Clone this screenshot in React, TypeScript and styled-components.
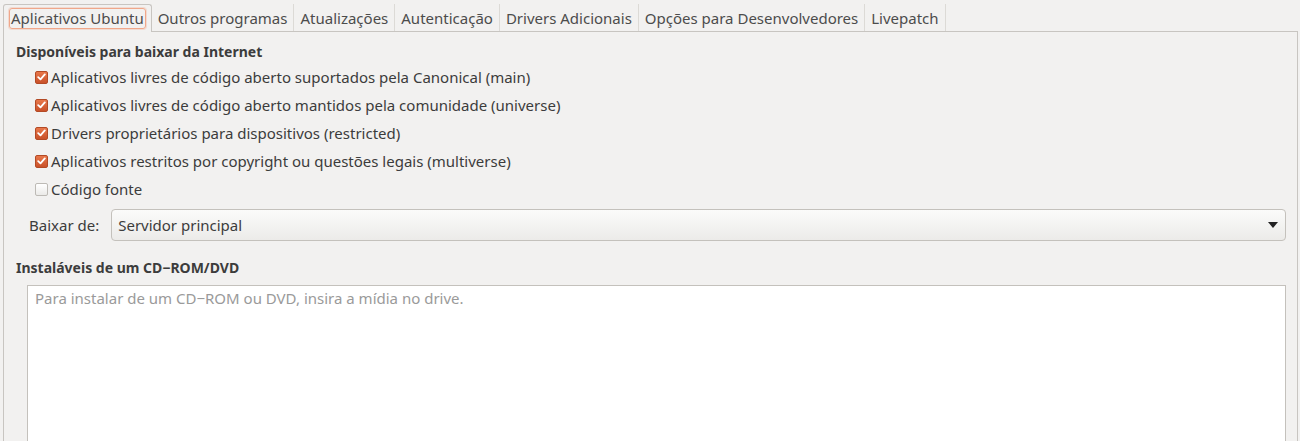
import React from 'react';
import styled, { createGlobalStyle } from 'styled-components';

const GlobalStyle = createGlobalStyle`
  html, body {
    margin: 0;
    padding: 0;
    background: #f2f1f0;
    font-family: "Noto Sans", "DejaVu Sans", sans-serif;
    font-size: 15px;
    color: #3c3c3c;
  }
`;

const Page = styled.div`
  height: 441px;
  overflow: hidden;
  padding: 4px 2px 0 3px;
  box-sizing: border-box;
`;

const TabBar = styled.div`
  display: flex;
  align-items: flex-end;
  height: 27px;
`;

const Tab = styled.div<{ $active?: boolean }>`
  height: 27px;
  box-sizing: border-box;
  display: flex;
  align-items: center;
  color: #4c4c4c;
  white-space: nowrap;
  ${(p) =>
    p.$active
      ? `
    border: 1px solid #c8c5c1;
    border-bottom: none;
    border-radius: 3px 3px 0 0;
    background: #f2f1f0;
    margin-bottom: -1px;
    height: 28px;
    padding: 0 5px;
    position: relative;
    z-index: 1;
  `
      : `
    border-right: 1px solid #dcdad6;
    padding: 0 6px;
  `}
`;

const FocusRing = styled.span`
  border: 1px solid #f0a78a;
  border-radius: 3px;
  padding: 0 1px;
  line-height: 19px;
  box-shadow: 0 0 0 1px rgba(240, 167, 138, 0.3);
`;

const Frame = styled.div`
  border: 1px solid #c8c5c1;
  border-bottom: none;
  height: 420px;
  box-sizing: border-box;
  padding: 10px 11px 0 12px;
  display: flex;
  flex-direction: column;
`;

const Heading = styled.div`
  font-weight: bold;
  font-size: 14px;
  color: #3c3c3c;
  line-height: 20px;
`;

const CheckList = styled.div`
  display: flex;
  flex-direction: column;
  padding-left: 19px;
  margin-top: 1px;
`;

const CheckRow = styled.label`
  display: flex;
  align-items: center;
  height: 28px;
  gap: 3px;
`;

const Box = styled.span<{ $checked?: boolean }>`
  width: 13px;
  height: 13px;
  border-radius: 2px;
  box-sizing: border-box;
  display: inline-flex;
  align-items: center;
  justify-content: center;
  ${(p) =>
    p.$checked
      ? `
    background: linear-gradient(#e8774a, #c95129);
    border: 1px solid #b34a25;
  `
      : `
    background: linear-gradient(#ffffff, #ebeae8);
    border: 1px solid #bdbab5;
  `}
`;

const ComboRow = styled.div`
  display: flex;
  align-items: center;
  gap: 12px;
  padding-left: 13px;
  margin-top: 6px;
`;

const Combo = styled.div`
  flex: 1;
  height: 32px;
  box-sizing: border-box;
  border: 1px solid #c4c1bc;
  border-radius: 4px;
  background: linear-gradient(#fbfbfa, #ecebe9);
  display: flex;
  align-items: center;
  justify-content: space-between;
  padding: 0 7px 0 6px;
  color: #3c3c3c;
`;

const Heading2 = styled(Heading)`
  margin-top: 17px;
`;

const TextArea = styled.div`
  margin: 7px 0 0 11px;
  flex: 1;
  background: #ffffff;
  border: 1px solid #c4c1bc;
  border-bottom: none;
  padding: 2px 7px;
  color: #9a9a9a;
`;

const tabs = [
  'Aplicativos Ubuntu',
  'Outros programas',
  'Atualizações',
  'Autenticação',
  'Drivers Adicionais',
  'Opções para Desenvolvedores',
  'Livepatch',
];

const sources = [
  { label: 'Aplicativos livres de código aberto suportados pela Canonical (main)', checked: true },
  { label: 'Aplicativos livres de código aberto mantidos pela comunidade (universe)', checked: true },
  { label: 'Drivers proprietários para dispositivos (restricted)', checked: true },
  { label: 'Aplicativos restritos por copyright ou questões legais (multiverse)', checked: true },
  { label: 'Código fonte', checked: false },
];

const Check = () => (
  <svg width="9" height="8" viewBox="0 0 9 8">
    <path d="M1.2 4.2 L3.5 6.4 L7.8 1.4" fill="none" stroke="#fff" strokeWidth="1.8" strokeLinecap="round" strokeLinejoin="round" />
  </svg>
);

const App: React.FC = () => {
  return (
    <>
      <GlobalStyle />
      <Page>
        <TabBar>
          {tabs.map((t, i) => (
            <Tab key={t} $active={i === 0}>
              {i === 0 ? <FocusRing>{t}</FocusRing> : t}
            </Tab>
          ))}
        </TabBar>
        <Frame>
          <Heading>Disponíveis para baixar da Internet</Heading>
          <CheckList>
            {sources.map((s) => (
              <CheckRow key={s.label}>
                <Box $checked={s.checked}>{s.checked && <Check />}</Box>
                {s.label}
              </CheckRow>
            ))}
          </CheckList>
          <ComboRow>
            <span>Baixar de:</span>
            <Combo>
              <span>Servidor principal</span>
              <svg width="10" height="6" viewBox="0 0 10 6">
                <path d="M0 0 H10 L5 6 Z" fill="#222" />
              </svg>
            </Combo>
          </ComboRow>
          <Heading2>Instaláveis de um CD−ROM/DVD</Heading2>
          <TextArea>Para instalar de um CD−ROM ou DVD, insira a mídia no drive.</TextArea>
        </Frame>
      </Page>
    </>
  );
};

export default App;
